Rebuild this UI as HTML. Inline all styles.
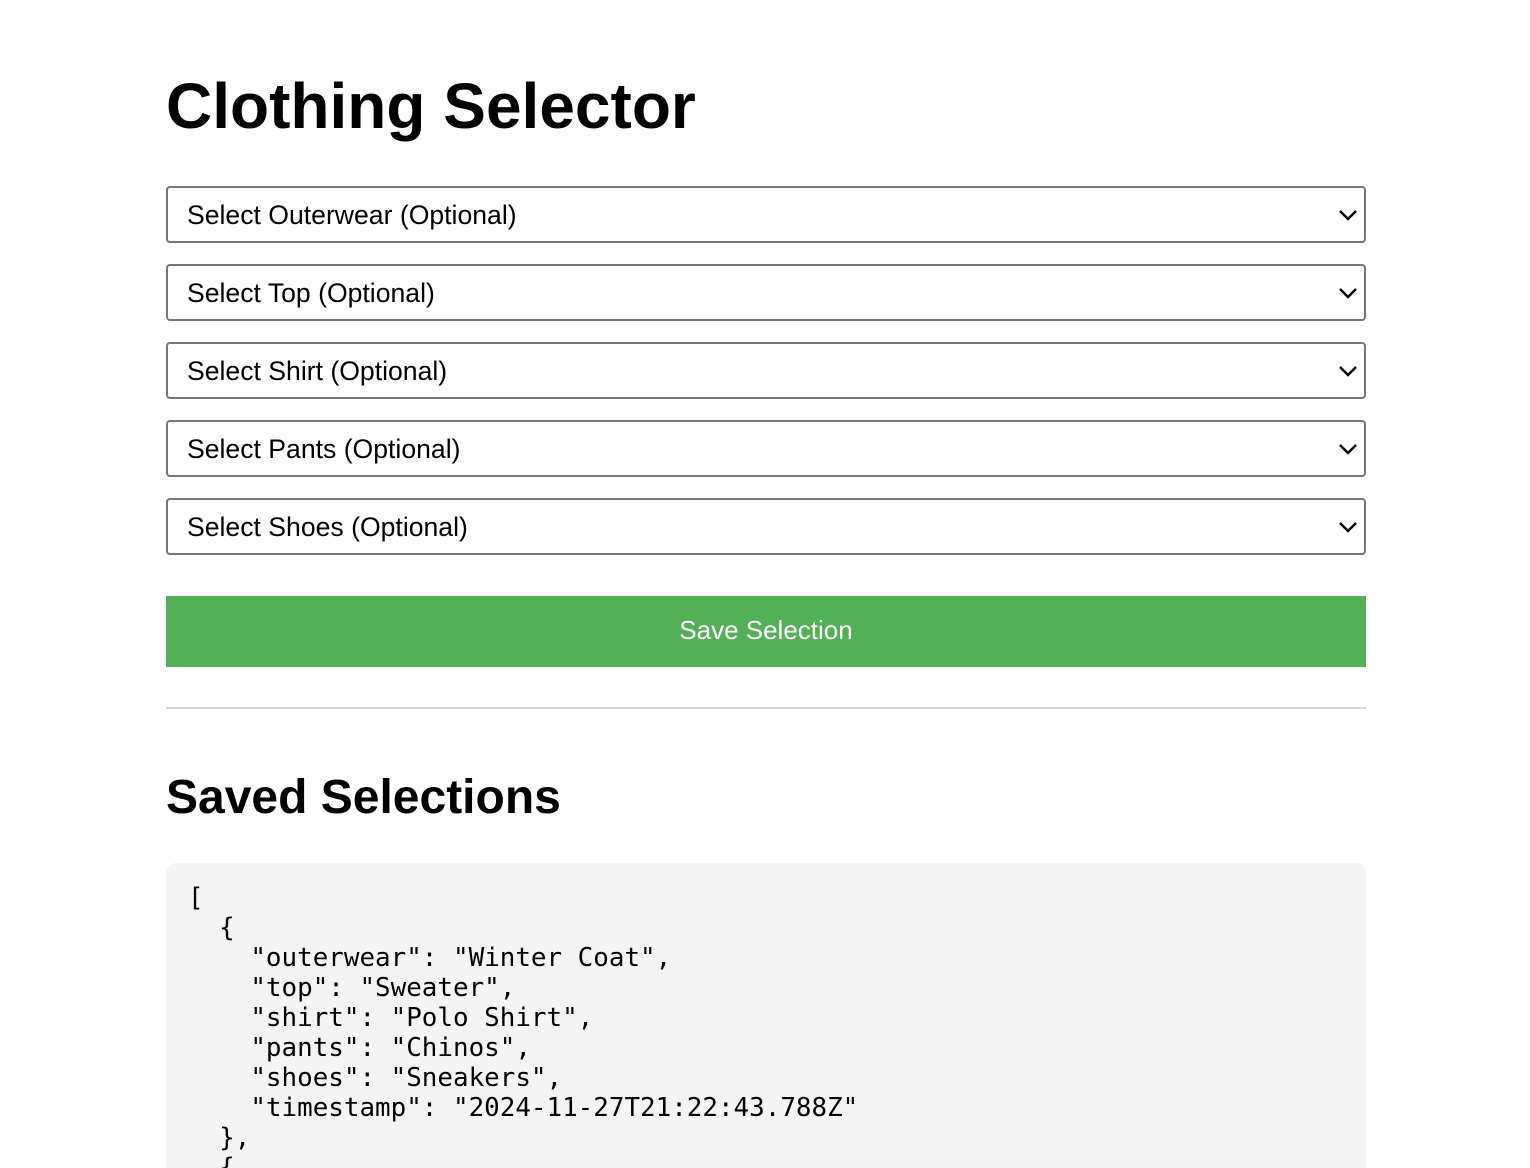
<!DOCTYPE html>
<html><head><meta charset="utf-8"><style>
html,body{margin:0;padding:0;background:#fff;overflow:hidden;height:1168px;width:1530px;position:relative}
body{font-family:"Liberation Sans",Arial,sans-serif;color:#000}
.c{position:absolute;left:166px;width:1200px;top:0;height:1168px;overflow:hidden}
h1{position:absolute;top:70px;left:0;margin:0;font-size:64px;font-weight:bold;line-height:72px}
.s{position:absolute;left:0;width:1200px;height:57px;box-sizing:border-box;border:2px solid #767676;border-radius:4px;background:#fff;font-size:26.6px;line-height:55px;padding-left:19px}
.s svg{position:absolute;right:6px;top:20px}
.btn{position:absolute;left:0;top:596px;width:1200px;height:71px;background:#52b157;color:#fff;font-size:26px;text-align:center;line-height:69px}
.hr{position:absolute;left:0;top:707px;width:1200px;height:2px;background:#d6d6d6}
h2{position:absolute;top:770px;left:0;margin:0;font-size:48px;font-weight:bold;line-height:56px}
pre{position:absolute;left:0;top:863px;width:1200px;height:305px;overflow:hidden;box-sizing:border-box;margin:0;background:#f4f4f4;border-radius:10px 10px 0 0;padding:20px 22px 0;font-family:"DejaVu Sans Mono","Liberation Mono",monospace;font-size:25.9px;line-height:30px}
</style></head><body><div class="c">
<h1>Clothing Selector</h1>
<div class="s" style="top:186px">Select Outerwear (Optional)<svg width="20" height="14" viewBox="0 0 20 14"><path d="M2 3l8 8 8-8" fill="none" stroke="#000" stroke-width="2.4"/></svg></div>
<div class="s" style="top:264px">Select Top (Optional)<svg width="20" height="14" viewBox="0 0 20 14"><path d="M2 3l8 8 8-8" fill="none" stroke="#000" stroke-width="2.4"/></svg></div>
<div class="s" style="top:342px">Select Shirt (Optional)<svg width="20" height="14" viewBox="0 0 20 14"><path d="M2 3l8 8 8-8" fill="none" stroke="#000" stroke-width="2.4"/></svg></div>
<div class="s" style="top:420px">Select Pants (Optional)<svg width="20" height="14" viewBox="0 0 20 14"><path d="M2 3l8 8 8-8" fill="none" stroke="#000" stroke-width="2.4"/></svg></div>
<div class="s" style="top:498px">Select Shoes (Optional)<svg width="20" height="14" viewBox="0 0 20 14"><path d="M2 3l8 8 8-8" fill="none" stroke="#000" stroke-width="2.4"/></svg></div>
<div class="btn">Save Selection</div>
<div class="hr"></div>
<h2>Saved Selections</h2>
<pre>[
  {
    "outerwear": "Winter Coat",
    "top": "Sweater",
    "shirt": "Polo Shirt",
    "pants": "Chinos",
    "shoes": "Sneakers",
    "timestamp": "2024-11-27T21:22:43.788Z"
  },
  {</pre>
</div></body></html>
